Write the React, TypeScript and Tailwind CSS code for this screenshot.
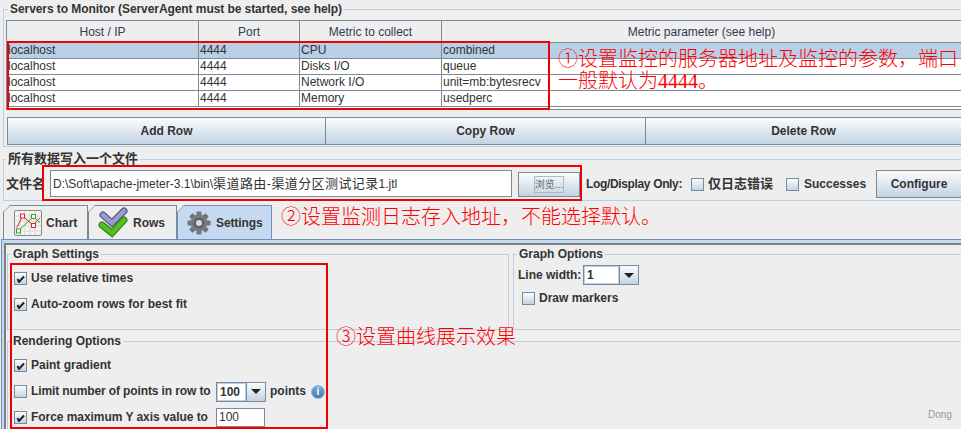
import React from "react";

const cn = (...a: string[]) => a.join(" ");
const ANNOT = "absolute text-[20px] leading-[22px] font-light text-[#ff0000] whitespace-nowrap [font-family:'Liberation_Serif','Noto_Sans_CJK_SC',serif]";
const BOX = "absolute border-[2px] border-[#f00000] pointer-events-none";

function Check({ on = false }: { on?: boolean }) {
  return (
    <span className="w-[13px] h-[13px] mt-[2px] shrink-0 border border-[#7a8a99] bg-gradient-to-b from-[#fbfcfd] to-[#c3d3e3] flex items-center justify-center">
      {on && (
        <svg width="9" height="9" viewBox="0 0 9 9">
          <path d="M1.5 5 L3 8 L8 2.5" fill="none" stroke="#222" strokeWidth="2" />
        </svg>
      )}
    </span>
  );
}

function Group({ title, className, legend = "left-[3px]", children }: { title: string; className: string; legend?: string; children?: React.ReactNode }) {
  return (
    <div className={cn("relative border border-[#b8cfe5]", className)}>
      <span className={cn("absolute top-[-8px] bg-[#eeeeee] px-[2px] leading-[14px] font-bold text-[#333] whitespace-nowrap", legend)}>{title}</span>
      {children}
    </div>
  );
}

function Combo({ value, w }: { value: string; w: string }) {
  return (
    <span className={cn("h-[20px] shrink-0 flex border border-[#7a8a99] bg-white", w)}>
      <span className="flex-1 pl-[2px] border border-[#b8cfe5] text-[12px] font-bold leading-[16px] text-[#333] bg-white">{value}</span>
      <span className="w-[19px] border-l border-[#7a8a99] bg-gradient-to-b from-[#fbfcfd] to-[#c3d3e3] flex items-center justify-center">
        <svg width="10" height="5" viewBox="0 0 10 5"><path d="M0 0 H10 L5 5 Z" fill="#222" /></svg>
      </span>
    </span>
  );
}

const rows = [
  ["localhost", "4444", "CPU", "combined"],
  ["localhost", "4444", "Disks I/O", "queue"],
  ["localhost", "4444", "Network I/O", "unit=mb:bytesrecv"],
  ["localhost", "4444", "Memory", "usedperc"],
];
const COLS = "grid grid-cols-[192px_101px_142px_1fr]";
const BTN = "bg-gradient-to-b from-[#fbfcfd] to-[#c3d3e3] border-[#7a8a99] font-bold text-[12px] text-[#333] flex items-center justify-center";
const ROW = "flex items-center gap-[4px] font-bold h-[13px] pb-[2px] whitespace-nowrap";

function ChartIcon() {
  return (
    <svg width="28" height="26" viewBox="0 0 28 26" className="shrink-0">
      <rect x="0.5" y="0.5" width="27" height="25" rx="1.5" fill="#f4f4f4" stroke="#8a8a8a" />
      <path d="M1 6H27M1 11H27M1 16H27M1 21H27M6 1V25M11 1V25M16 1V25M21 1V25" stroke="#d9d9d9" />
      <path d="M2.7 17.7 L8.7 6 L19.3 15.3 L26 7.7" fill="none" stroke="#d8262c" />
      <path d="M4.3 21 L19.3 6.7 L26 12.7" fill="none" stroke="#3a9a2a" />
      <rect x="6.5" y="4" width="4" height="4" fill="#fff" stroke="#d8262c" />
      <rect x="17.5" y="13.5" width="4" height="4" fill="#fff" stroke="#d8262c" />
      <rect x="17.5" y="4.5" width="4" height="4" fill="#fff" stroke="#3a9a2a" />
      <rect x="2.5" y="19" width="4" height="4" fill="#fff" stroke="#3a9a2a" />
    </svg>
  );
}
function RowsIcon() {
  return (
    <svg width="31" height="31" viewBox="0 0 31 31" className="shrink-0">
      <path d="M5 8 L14 16 L26 4" fill="none" stroke="#55558f" strokeWidth="7" strokeLinecap="round" />
      <path d="M5 8 L14 16 L26 4" fill="none" stroke="#9c9ccc" strokeWidth="4.5" strokeLinecap="round" />
      <path d="M4 18 L14 26 L26 13" fill="none" stroke="#2c8a12" strokeWidth="7" strokeLinecap="round" />
      <path d="M4 18 L14 26 L26 13" fill="none" stroke="#56bd24" strokeWidth="4.5" strokeLinecap="round" />
    </svg>
  );
}
function GearIcon() {
  const teeth = [0, 45, 90, 135, 180, 225, 270, 315];
  return (
    <svg width="24" height="24" viewBox="0 0 24 24" className="shrink-0">
      {teeth.map((t) => (
        <rect key={t} x="9.5" y="0.5" width="5" height="5" rx="1" fill="#6f7478" transform={`rotate(${t} 12 12)`} />
      ))}
      <circle cx="12" cy="12" r="8.5" fill="#777c80" />
      <circle cx="12" cy="12" r="5.5" fill="#5b6064" />
      <circle cx="12" cy="12" r="3" fill="#d4dde6" />
    </svg>
  );
}

function Tab({ label, icon, active, w }: { label: string; icon: React.ReactNode; active?: boolean; w: string }) {
  return (
    <div
      className={cn(
        "relative h-full flex items-center border-t border-r border-l [clip-path:polygon(7px_0,100%_0,100%_100%,0_100%,0_7px)]",
        w,
        active ? "bg-[#c5daf0] border-[#6f8db5]" : "bg-[#eeeeee] border-[#7a8a99]"
      )}
    >
      <svg width="8" height="8" viewBox="0 0 8 8" className="absolute -left-px -top-px">
        <path d="M0 7.5 L7.5 0" stroke={active ? "#6f8db5" : "#7a8a99"} fill="none" />
      </svg>
      {icon}
      <span className={cn("font-bold text-[#333]", active ? "ml-[5px] tracking-[-0.1px]" : "ml-[4px]")}>{label}</span>
    </div>
  );
}

export default function App() {
  return (
    <div className="relative w-[961px] h-[429px] overflow-hidden bg-[#eeeeee] text-[12px] text-[#333] [font-family:'Liberation_Sans','Noto_Sans_CJK_SC',sans-serif]">
      <div className="pl-[3px] pt-[9px]">
        <Group title="Servers to Monitor (ServerAgent must be started, see help)" legend="left-[4px] tracking-[-0.07px]" className="h-[138px] pl-[2px] pt-[10px] border-r-0">
          <div className="border-t border-l border-b border-[#7a8a99] h-[90px] bg-white">
            <div className={cn(COLS, "h-[22px] bg-[#eeeeee] border-b border-[#7a8a99] text-[#2f3a55]")}>
              {["Host / IP", "Port", "Metric to collect", "Metric parameter (see help)"].map((h, i) => (
                <div key={h} className={cn("flex items-center justify-center", i < 3 ? "border-r border-[#7a8a99]" : "")}>{h}</div>
              ))}
            </div>
            {rows.map((r, i) => (
              <div key={i} className={cn(COLS, "h-[16px] border-b border-[#7a8a99]", i === 0 ? "bg-[#b8cfe5]" : "bg-white")}>
                {r.map((c, j) => (
                  <div key={j} className={cn("pl-[1px] leading-[15px] whitespace-nowrap", j < 3 ? "border-r border-[#7a8a99]" : "")}>{c}</div>
                ))}
              </div>
            ))}
          </div>
          <div className="grid grid-cols-[319px_320px_1fr] h-[28px] mt-[7px] ml-[1px]">
            <div className={cn(BTN, "border")}>Add Row</div>
            <div className={cn(BTN, "border-y border-r")}>Copy Row</div>
            <div className={cn(BTN, "border-y")}>Delete Row</div>
          </div>
        </Group>

        <Group title="所有数据写入一个文件" legend="left-[2px] text-[13px]" className="mt-[12px] h-[42px] border-r-0 pt-[10px]">
          <div className="flex items-center h-[28px] w-full whitespace-nowrap">
            <span className="font-bold text-[13px] ml-[2px] w-[44px] shrink-0">文件名</span>
            <div className="w-[462px] h-[27px] self-start shrink-0 border border-[#7a8a99] bg-white pl-[2px] flex items-center text-[#333]">
              D:\Soft\apache-jmeter-3.1\bin\<span className="text-[13px] tracking-[0.4px]">渠道路由-渠道分区测试记录</span>1.jtl
            </div>
            <div className={cn(BTN, "border w-[62px] h-[25px] ml-[6px] mt-[1px] shrink-0")}>
              <span className="border border-[#a9bccf] w-[30px] h-[17px] flex items-center justify-center text-[10px] font-normal text-[#666]">浏览...</span>
            </div>
            <span className="font-bold ml-[6px] w-[96px] shrink-0 tracking-[-0.35px]">Log/Display Only:</span>
            <span className="ml-[9px] -mt-[2px]"><Check /></span>
            <span className="font-bold ml-[4px] text-[13px] w-[65px] shrink-0">仅日志错误</span>
            <span className="ml-[13px] -mt-[2px]"><Check /></span>
            <span className="font-bold ml-[5px] w-[63px] shrink-0">Successes</span>
            <div className={cn(BTN, "border border-r-0 h-[28px] ml-[9px] flex-1")}>Configure</div>
          </div>
        </Group>
      </div>

      <div className="flex h-[34px] mt-[4px] pl-[3px]">
        <Tab label="Chart" w="w-[85px] pl-[10px]" icon={<ChartIcon />} />
        <Tab label="Rows" w="w-[89px] pl-[9px]" icon={<RowsIcon />} />
        <Tab label="Settings" active w="w-[95px] pl-[9px]" icon={<GearIcon />} />
      </div>

      <div className="ml-[1px] border-t border-l border-[#6f8db5] bg-[#c5daf0] pt-[3px] pl-[2px] h-[190px]">
        <div className="border-t-[2px] border-l-[2px] border-[#7f7f7f] bg-[#eeeeee] h-full pl-[1px] pt-[9px]">
          <div className="flex gap-[4px]">
            <Group title="Graph Settings" className="w-[502px] h-[76px] pl-[6px] pt-[17px] flex flex-col gap-[13px]">
              <div className={ROW}><Check on />Use relative times</div>
              <div className={ROW}><Check on />Auto-zoom rows for best fit</div>
            </Group>
            <Group title="Graph Options" className="flex-1 h-[76px] border-r-0 pl-[4px] pt-[10px]">
              <div className="flex items-center gap-[4px] font-bold h-[20px]">
                <span className="w-[61px] whitespace-nowrap">Line width:</span><Combo value="1" w="w-[56px]" />
              </div>
              <div className={cn(ROW, "mt-[7px] ml-[4px]")}><Check />Draw markers</div>
            </Group>
          </div>
          <Group title="Rendering Options" className="mt-[11px] h-[100px] border-b-0 border-r-0 pl-[6px] pt-[17px] flex flex-col gap-[13px]">
            <div className={ROW}><Check on />Paint gradient</div>
            <div className={ROW}>
              <Check />
              <span className="w-[185px] tracking-[-0.12px]">Limit number of points in row to</span>
              <span className="-ml-[4px] mt-[2px]"><Combo value="100" w="w-[50px]" /></span>
              <span>points</span>
              <span className="ml-[1px] mt-[2px] w-[14px] h-[14px] rounded-full bg-gradient-to-b from-[#7fa9d8] to-[#3f76b8] border border-[#8fb4dc] text-white text-[10px] leading-[12px] text-center">i</span>
            </div>
            <div className={ROW}>
              <Check on />
              <span className="w-[185px] tracking-[-0.05px]">Force maximum Y axis value to</span>
              <span className="-ml-[4px] mt-[2px] w-[49px] h-[19px] border border-[#7a8a99] bg-white pl-[2px] font-normal leading-[17px] shrink-0">100</span>
            </div>
          </Group>
        </div>
      </div>

      {/* Annotations laid over the screenshot */}
      <div className={cn(BOX, "left-[7px] top-[41px] w-[543px] h-[69px]")} />
      <div className={cn(BOX, "left-[42px] top-[165px] w-[540px] h-[36px]")} />
      <div className={cn(BOX, "left-[10px] top-[263px] w-[318px] h-[166px]")} />
      <div className={cn(ANNOT, "left-[558px] top-[48px]")}>①设置监控的服务器地址及监控的参数，端口<br />一般默认为4444。</div>
      <div className={cn(ANNOT, "left-[281px] top-[206px]")}>②设置监测日志存入地址，不能选择默认。</div>
      <div className={cn(ANNOT, "left-[336px] top-[326px]")}>③设置曲线展示效果</div>
      <div className="absolute left-[928px] top-[407px] text-[10px] text-[#999]">Dong</div>
    </div>
  );
}
